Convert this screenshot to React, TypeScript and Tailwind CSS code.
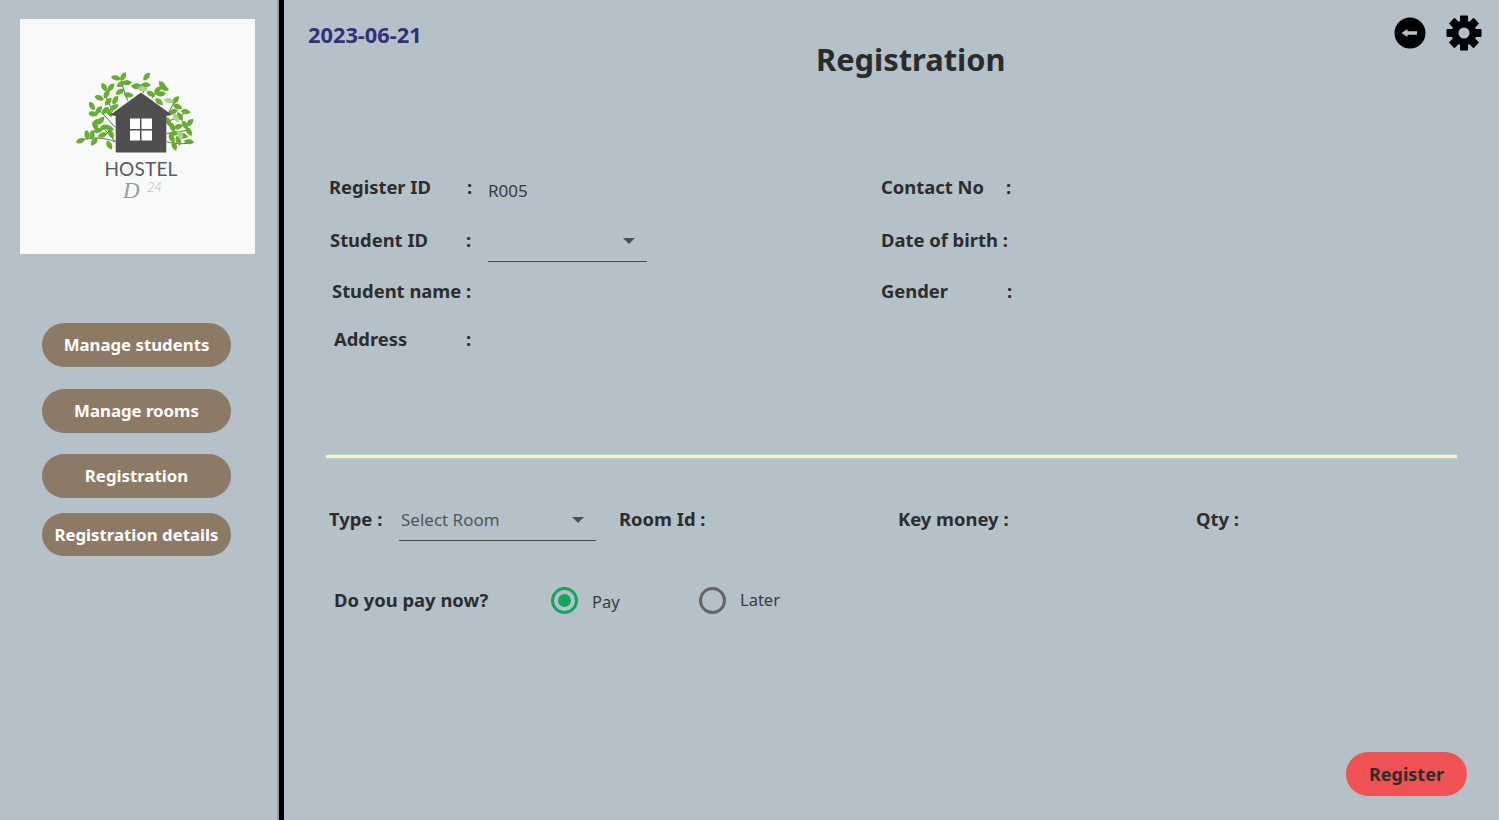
const FF = "font-['Noto_Sans','Open_Sans',sans-serif]";

const leaves: [number, number, number][] = [
  [46, 13, 15], [53.3, 11.7, -60], [57, 17.7, 0], [51.3, 19, -30], [50, 26.7, -30], [58.7, 30, 10],
  [34.3, 22.3, 60], [41, 22.3, -50], [36.7, 29, -60], [29.3, 33, 20], [38.3, 36.7, -50], [45.3, 35, -60],
  [35.3, 45.7, -50], [44.3, 42.3, -30], [22, 41, 60], [23.3, 49, 10], [28.7, 45, -50], [39.3, 47.7, 60],
  [26, 57.7, -50], [31, 55.7, -50], [25.3, 61, 60], [27.7, 65.7, -10], [34.3, 62.3, -20], [39.3, 63.3, 20],
  [41, 69, 60], [32.7, 70, -20], [22, 70, 90], [17, 70, 80], [10.7, 75.7, -20], [24.3, 76.7, -50],
  [39.3, 80, 60], [66, 21.7, 10],
  [76.7, 11.7, -50], [67.7, 21, 10], [75.7, 20, 0], [81, 29, 30], [87.7, 25, -50], [92.3, 20, 50],
  [94.3, 23.3, 20], [91, 29, -10], [89, 36.7, 40], [105.7, 35, -50], [107.7, 41.7, 20],
  [103.3, 46.7, -20], [115.7, 46.7, 10], [110, 51.7, 60], [98.3, 56.7, 70], [102.3, 62.3, 70],
  [108.3, 61.7, -20], [115, 60, 60], [120, 57.7, -50], [119, 66.7, 60], [104.3, 68.3, -10],
  [101.7, 73.3, 60], [113.3, 71, 10], [108.3, 75.7, 70], [119, 76.7, 5], [104.3, 81, 70],
];

const lightLeaves: [number, number, number][] = [
  [99, 35.7, 10], [73, 24, 10], [106, 53, 60], [110, 70, 60],
];

const branches = [
  "M45.3 76.7 C36 73 20 71 10.7 75.7",
  "M45.3 62.3 L29.3 45",
  "M45.3 76.7 L32.7 62.3",
  "M57.7 35.7 L51 16.7",
  "M42.7 46.7 L34.3 28.3",
  "M76 20 L73.3 28",
  "M86.7 28 L81.7 33.3",
  "M106.7 33 L98.3 48",
  "M96.7 68.3 C104 68 114 67 120 63.3",
  "M96.7 76.7 C104 79 112 79 118.3 78.3",
  "M98.3 56.7 L115 48",
];

const leafPath = "M-5 0 C-2.6 -3.6 2.2 -3.4 5 0 C2.2 3.2 -2.6 3.4 -5 0 Z";

function Logo() {
  return (
    <svg width={135} height={140} viewBox="0 0 135 140" className="mb-[3px]">
      {branches.map((d, i) => (
        <path key={i} d={d} stroke="#5f4a4a" strokeWidth={0.9} fill="none" />
      ))}
      {leaves.map(([x, y, r], i) => (
        <path key={i} d={leafPath} transform={`translate(${x} ${y}) rotate(${r})`} fill="#66ad30" />
      ))}
      {lightLeaves.map(([x, y, r], i) => (
        <path key={i} d={leafPath} transform={`translate(${x} ${y}) rotate(${r})`} fill="#a5d884" />
      ))}
      <path d="M71 27.5 L102 50 L96.3 51 L96.3 87.5 L45.7 87.5 L45.7 51 L40 50 Z" fill="#4f4f50" />
      <rect x="60" y="53.5" width="10" height="10.5" fill="#fff" />
      <rect x="71.5" y="53.5" width="10.5" height="10.5" fill="#fff" />
      <rect x="60" y="65.5" width="10" height="10" fill="#fff" />
      <rect x="71.5" y="65.5" width="10.5" height="10" fill="#fff" />
      <text x="71" y="110.5" textAnchor="middle" fontSize="19" fill="#5a5a5a" fontFamily="Lato, sans-serif" letterSpacing="0.2">
        HOSTEL
      </text>
      <text x="53" y="133" fontSize="23" fill="#9a9a9a" fontStyle="italic" fontFamily="Liberation Serif, serif">
        D
      </text>
      <text x="77" y="127" fontSize="13" fill="#b0b0b0" fontStyle="italic" fontFamily="Lato, sans-serif" fontWeight="300">
        24
      </text>
    </svg>
  );
}

function Gear() {
  const teeth = [0, 45, 90, 135];
  return (
    <svg width={36} height={36} viewBox="0 0 36 36">
      {teeth.map((a) => (
        <rect key={a} x="14" y="0.5" width="8" height="35" rx="0.8" transform={`rotate(${a} 18 18)`} fill="#000" />
      ))}
      <circle cx="18" cy="18" r="12.5" fill="#000" />
      <circle cx="18" cy="18" r="5.5" fill="#b5c1c9" />
    </svg>
  );
}

function Back() {
  return (
    <svg width={32} height={32} viewBox="0 0 32 32">
      <circle cx="16" cy="16" r="15.5" fill="#000" />
      <path d="M7.5 16 L13.5 12 L13.5 14.2 L23 14.2 L23 17.8 L13.5 17.8 L13.5 20 Z" fill="#b5c1c9" />
    </svg>
  );
}

function SideButton({ label, className }: { label: string; className: string }) {
  return (
    <button className={`flex w-[189px] items-center justify-center rounded-full bg-[#8d7a66] text-[16.8px] font-bold text-white ${className}`}>
      {label}
    </button>
  );
}

function Caret() {
  return <span className="h-0 w-0 border-x-[6px] border-t-[6px] border-x-transparent border-t-[#505050]" />;
}

const label = "text-[18.4px] font-bold text-[#2d2d2d] leading-[26px] whitespace-nowrap";

export default function App() {
  return (
    <div className={`flex h-[820px] w-[1499px] overflow-hidden bg-[#b5c1c9] ${FF}`}>
      <aside className="flex h-full w-[284px] shrink-0 flex-col border-r-[5px] border-black">
        <div className="h-full border-r-[2px] border-[#9c9fa2] pl-[20px] pt-[19px]">
          <div className="flex h-[235px] w-[235px] items-center justify-center bg-[#f8faf9]">
            <Logo />
          </div>
          <div className="pl-[22px] pt-[69px]">
            <SideButton label="Manage students" className="h-[44px]" />
            <SideButton label="Manage rooms" className="mt-[22px] h-[44px]" />
            <SideButton label="Registration" className="mt-[21px] h-[44px]" />
            <SideButton label="Registration details" className="mt-[15px] h-[43px]" />
          </div>
        </div>
      </aside>

      <main className="flex h-full flex-1 flex-col">
        <header className="flex h-[88px] items-start">
          <div className="ml-[24px] mt-[20px] w-[508px] text-[21.8px] font-bold leading-[29px] text-[#33307a]">2023-06-21</div>
          <h1 className="mt-[37px] text-[30.8px] font-bold leading-[44px] text-[#2b2b2b]">Registration</h1>
          <div className="ml-auto mr-[17px] mt-[15px] flex items-center gap-[20px]">
            <Back />
            <Gear />
          </div>
        </header>

        <section className="pt-[86px]">
          <div className="flex h-[26px] items-center">
            <span className={`${label} ml-[45px] w-[138px]`}>Register ID</span>
            <span className={`${label} w-[21px]`}>:</span>
            <span className="mt-[8px] w-[393px] text-[17px] leading-[24px] text-[#3a3a3a]">R005</span>
            <span className={`${label} w-[125px]`}>Contact No</span>
            <span className={label}>:</span>
          </div>
          <div className="mt-[27px] flex h-[26px] items-center">
            <span className={`${label} ml-[46px] w-[136px]`}>Student ID</span>
            <span className={`${label} w-[22px]`}>:</span>
            <div className="mt-[10px] flex h-[34px] w-[159px] items-center justify-end border-b border-[#4a4a4a] pb-[7px] pr-[12px]">
              <Caret />
            </div>
            <span className={`${label} ml-[234px]`}>Date of birth :</span>
          </div>
          <div className="mt-[25px] flex h-[26px] items-center">
            <span className={`${label} ml-[48px] w-[549px]`}>Student name :</span>
            <span className={`${label} w-[126px]`}>Gender</span>
            <span className={label}>:</span>
          </div>
          <div className="mt-[22px] flex h-[26px] items-center">
            <span className={`${label} ml-[50px] w-[132px]`}>Address</span>
            <span className={label}>:</span>
          </div>
        </section>

        <div className="ml-[42px] mt-[103px] h-[3px] w-[1131px] bg-[#f2f5cf] shadow-[0_0_2px_#e6eec0]" />

        <section className="mt-[48px] flex h-[26px] items-center">
          <span className={`${label} ml-[45px] w-[70px]`}>Type :</span>
          <div className="mt-[2px] flex h-[41px] w-[197px] items-center justify-between border-b border-[#4a4a4a] pl-[2px] pr-[12px]">
            <span className="text-[17px] text-[#555]">Select Room</span>
            <Caret />
          </div>
          <span className={`${label} ml-[23px] w-[279px]`}>Room Id :</span>
          <span className={`${label} w-[298px]`}>Key money :</span>
          <span className={label}>Qty :</span>
        </section>

        <section className="mt-[52px] flex h-[32px] items-center">
          <span className={`${label} ml-[50px] w-[217px]`}>Do you pay now?</span>
          <span className="flex h-[27px] w-[27px] items-center justify-center rounded-full border-[3px] border-[#16a45f]">
            <span className="h-[13px] w-[13px] rounded-full bg-[#16a45f]" />
          </span>
          <span className="ml-[14px] mt-[5px] w-[107px] text-[16.5px] text-[#3a3a3a]">Pay</span>
          <span className="h-[27px] w-[27px] rounded-full border-[3px] border-[#666]" />
          <span className="ml-[14px] mt-[1px] text-[16.5px] text-[#3a3a3a]">Later</span>
        </section>

        <div className="mt-auto mb-[24px] mr-[32px] self-end">
          <button className="flex h-[44px] w-[121px] items-center justify-center rounded-full bg-[#ee5253] text-[18px] font-bold text-[#2d2d2d]">
            Register
          </button>
        </div>
      </main>
    </div>
  );
}
